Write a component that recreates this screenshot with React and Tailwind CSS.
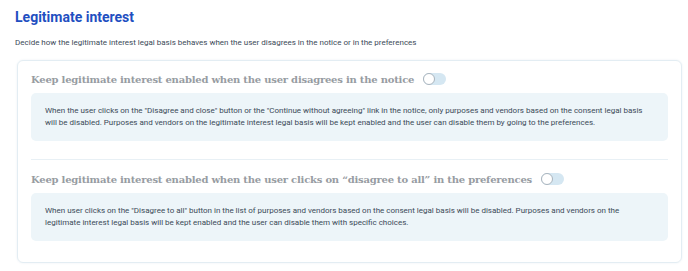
import React from "react";

function Toggle() {
  return (
    <span className="relative inline-block h-[12px] w-[23px] shrink-0 rounded-full bg-[#d5e7f2]">
      <span className="absolute left-0 top-0 h-[12px] w-[12px] rounded-full border border-[#a9b4bd] bg-white" />
    </span>
  );
}

function Section({ title, children }) {
  return (
    <div className="flex flex-col">
      <div className="flex h-[20px] items-center gap-[9px]">
        <span className="text-[10px] font-bold text-[#979ca2] [font-family:'DejaVu_Serif',serif] tracking-[-0.22px]">
          {title}
        </span>
        <Toggle />
      </div>
      <div className="mt-[4px] rounded-[5px] bg-[#edf5f9] px-[14px] py-[12px] text-[8px] leading-[12px] text-[#3b4a58] [font-family:Roboto,sans-serif]">
        {children}
      </div>
    </div>
  );
}

export default function App() {
  return (
    <div className="h-[271px] w-[688px] bg-white pl-[15px] pr-[6px] [font-family:Roboto,sans-serif]">
      <h1 className="pt-[7px] text-[14px] font-bold leading-[20px] text-[#1f4fc1]">Legitimate interest</h1>
      <p className="mt-[10px] text-[8px] leading-[12px] text-[#3b4a58]">
        Decide how the legitimate interest legal basis behaves when the user disagrees in the notice or in the preferences
      </p>
      <div className="ml-[2px] mt-[11px] flex flex-col rounded-[6px] border border-[#e3edf3] px-[13px] pb-[21px] pt-[8px] shadow-[0_0_2px_rgba(180,200,215,0.3)]">
        <Section title="Keep legitimate interest enabled when the user disagrees in the notice">
          When the user clicks on the "Disagree and close" button or the "Continue without agreeing" link in the notice, only purposes and vendors based on the consent legal basis will be disabled. Purposes and vendors on the legitimate interest legal basis will be kept enabled and the user can disable them by going to the preferences.
        </Section>
        <div className="mb-[9px] mt-[18px] h-px bg-[#e8f0f5]" />
        <Section title="Keep legitimate interest enabled when the user clicks on “disagree to all” in the preferences">
          When user clicks on the "Disagree to all" button in the list of purposes and vendors based on the consent legal basis will be disabled. Purposes and vendors on the legitimate interest legal basis will be kept enabled and the user can disable them with specific choices.
        </Section>
      </div>
    </div>
  );
}
